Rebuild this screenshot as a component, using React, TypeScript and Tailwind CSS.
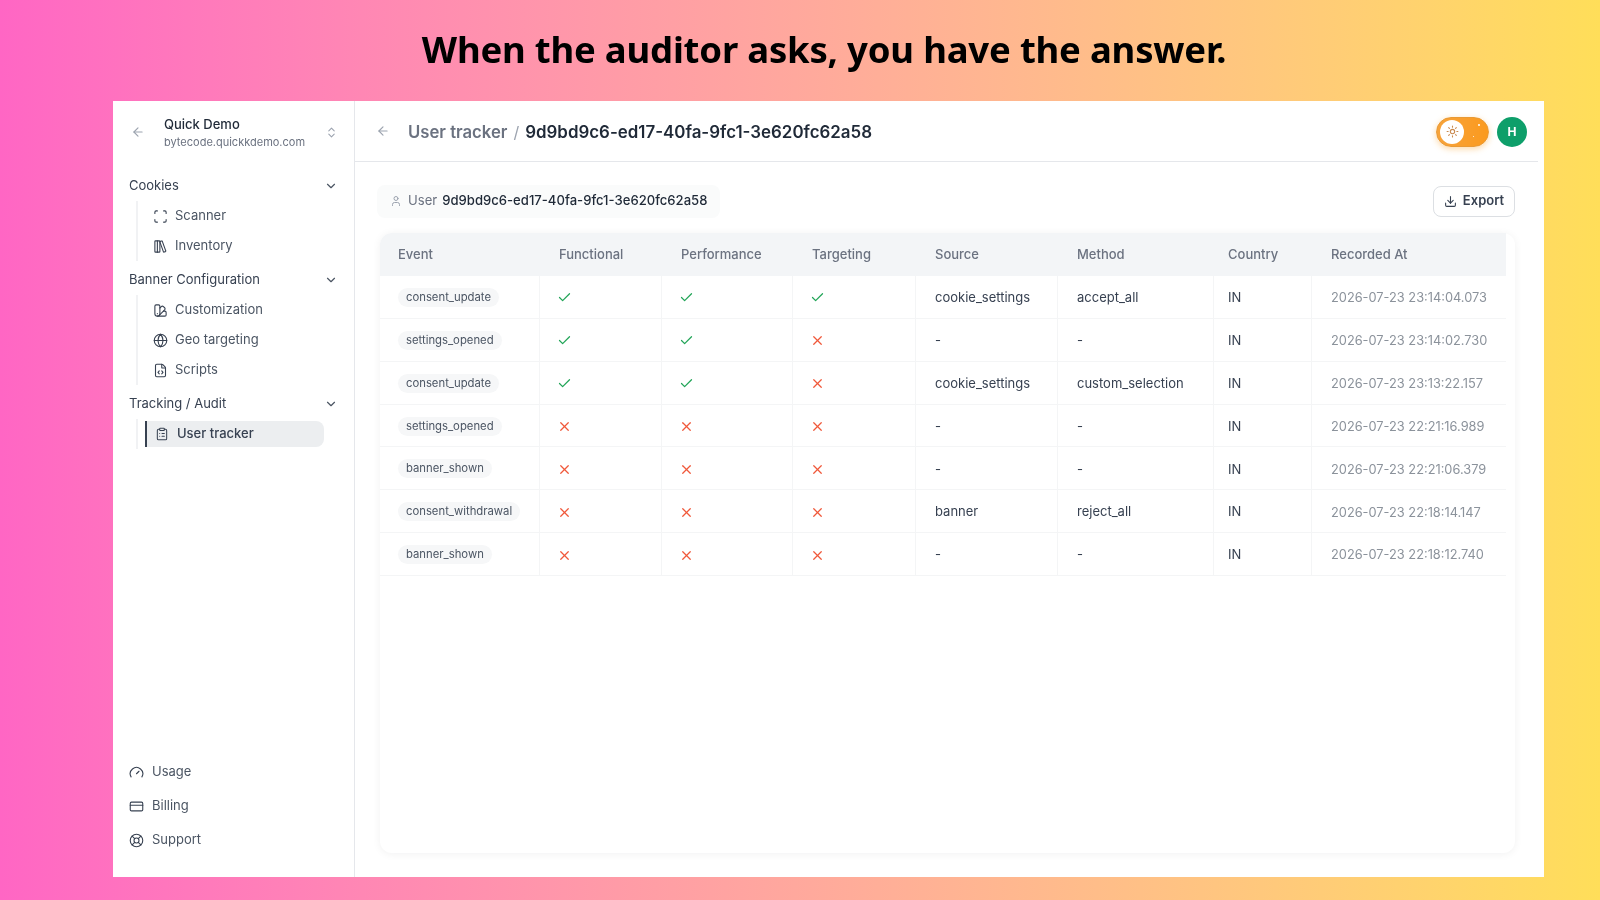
import { ArrowLeft, Check, ChevronDown, ChevronsUpDown, ClipboardList, CreditCard, Download, FileCode, Gauge, Globe, LibraryBig, LifeBuoy, Scan, Sun, SwatchBook, User, X } from 'lucide-react'

const rows = [
  { event: 'consent_update', f: true, p: true, t: true, source: 'cookie_settings', method: 'accept_all', at: '2026-07-23 23:14:04.073' },
  { event: 'settings_opened', f: true, p: true, t: false, source: '-', method: '-', at: '2026-07-23 23:14:02.730' },
  { event: 'consent_update', f: true, p: true, t: false, source: 'cookie_settings', method: 'custom_selection', at: '2026-07-23 23:13:22.157' },
  { event: 'settings_opened', f: false, p: false, t: false, source: '-', method: '-', at: '2026-07-23 22:21:16.989' },
  { event: 'banner_shown', f: false, p: false, t: false, source: '-', method: '-', at: '2026-07-23 22:21:06.379' },
  { event: 'consent_withdrawal', f: false, p: false, t: false, source: 'banner', method: 'reject_all', at: '2026-07-23 22:18:14.147' },
  { event: 'banner_shown', f: false, p: false, t: false, source: '-', method: '-', at: '2026-07-23 22:18:12.740' },
]

const groups = [
  { title: 'Cookies', items: [{ label: 'Scanner', icon: Scan }, { label: 'Inventory', icon: LibraryBig }] },
  { title: 'Banner Configuration', items: [{ label: 'Customization', icon: SwatchBook }, { label: 'Geo targeting', icon: Globe }, { label: 'Scripts', icon: FileCode }] },
]

const Mark = ({ ok }: { ok: boolean }) =>
  ok ? <Check size={15} strokeWidth={2} className="text-[#22a558] -ml-[2px]" /> : <X size={15} strokeWidth={2} className="text-[#f0583a] -ml-[2px]" />

const App = () => {
  return (
    <div className="w-[1600px] h-[900px] overflow-hidden bg-linear-to-r from-[#ff66c4] to-[#ffde59] font-['Inter','Noto_Sans',sans-serif]">
      <h1 className="h-[101px] pt-[25px] pl-[48px] text-center text-[36.5px] leading-[48px] font-bold text-black font-['Noto_Sans',sans-serif] tracking-[-0.2px] blur-[0.3px]">
        When the auditor asks, you have the answer.
      </h1>

      <div className="ml-[113px] w-[1431px] h-[776px] bg-white flex blur-[0.35px]">
        {/* sidebar */}
        <aside className="w-[242px] shrink-0 border-r border-[#e5e7eb] flex flex-col pl-[16px] pr-[14px] pb-[20px]">
          <div className="flex items-center h-[62px] mb-[8px]">
            <ArrowLeft size={14} className="text-[#9ca3af] ml-[2px]" />
            <div className="ml-[19px] flex-1 mt-[2px]">
              <div className="text-[13px] leading-[18px] font-medium text-[#1f2937]">Quick Demo</div>
              <div className="text-[11px] leading-[18px] text-[#6b7280]">bytecode.quickkdemo.com</div>
            </div>
            <ChevronsUpDown size={13} className="text-[#9ca3af] mr-[2px]" />
          </div>

          {groups.map((g) => (
            <div key={g.title}>
              <div className="flex items-center justify-between h-[30px] text-[13px] text-[#374151]">
                {g.title}
                <ChevronDown size={14} className="text-[#4b5563] mr-[2px]" />
              </div>
              <div className="ml-[7px] border-l-2 border-[#f1f2f4] pl-[15px] mb-[4px]">
                {g.items.map((it) => (
                  <div key={it.label} className="flex items-center h-[30px] text-[13px] text-[#4b5563]">
                    <it.icon size={15} strokeWidth={1.75} className="text-[#374151] mr-[7px]" />
                    {it.label}
                  </div>
                ))}
              </div>
            </div>
          ))}

          <div>
            <div className="flex items-center justify-between h-[30px] text-[13px] text-[#374151]">
              Tracking / Audit
              <ChevronDown size={14} className="text-[#4b5563] mr-[2px]" />
            </div>
            <div className="ml-[7px] border-l-2 border-[#f1f2f4] pl-[7px] py-[2px]">
              <div className="flex items-center h-[26px] w-[179px] rounded-r-lg bg-[#eceef0] border-l-2 border-[#374151] pl-[8px] text-[13px] font-medium text-[#374151]">
                <ClipboardList size={14} strokeWidth={1.75} className="mr-[8px]" />
                User tracker
              </div>
            </div>
          </div>

          <div className="mt-auto flex flex-col">
            {[
              { label: 'Usage', icon: Gauge },
              { label: 'Billing', icon: CreditCard },
              { label: 'Support', icon: LifeBuoy },
            ].map((it) => (
              <div key={it.label} className="flex items-center h-[34px] text-[13px] text-[#4b5563]">
                <it.icon size={15} strokeWidth={1.75} className="text-[#374151] mr-[8px]" />
                {it.label}
              </div>
            ))}
          </div>
        </aside>

        {/* main */}
        <main className="flex-1 min-w-0 flex flex-col">
          <header className="h-[61px] shrink-0 mr-[6px] border-b border-[#e5e7eb] flex items-center pl-[21px] pr-[11px]">
            <ArrowLeft size={14} className="text-[#9ca3af]" />
            <div className="ml-[18px] flex items-center pt-[3px]">
              <span className="text-[16.7px] font-semibold text-[#6b7280]">User tracker</span>
              <span className="mx-[6px] text-[16px] text-[#9ca3af]">/</span>
              <span className="text-[16.9px] font-semibold text-[#1f2937]">9d9bd9c6-ed17-40fa-9fc1-3e620fc62a58</span>
            </div>
            <div className="ml-auto flex items-center gap-[8px] pt-[1px]">
              <div className="w-[53px] h-[30px] rounded-full bg-linear-to-r from-[#f7a33a] to-[#fb9a1c] border border-[#e99a35] shadow-[0_2px_6px_rgba(251,160,40,0.4)] flex items-center pl-[3px] relative">
                <div className="w-[24px] h-[24px] rounded-full bg-white flex items-center justify-center">
                  <Sun size={13} className="text-[#c98a50]" />
                </div>
                <span className="absolute right-[8px] top-[6px] w-[2px] h-[2px] rounded-full bg-white" />
                <span className="absolute right-[14px] top-[18px] w-[1px] h-[1px] rounded-full bg-white" />
              </div>
              <div className="w-[30px] h-[30px] rounded-full bg-[#0e9f6a] text-white text-[12px] font-bold flex items-center justify-center">H</div>
            </div>
          </header>

          <div className="flex-1 min-h-0 pl-[22px] pr-[29px] pb-[24px] pt-[22px] flex flex-col">
            <div className="flex items-center justify-between h-[34px] shrink-0">
              <div className="h-[33px] rounded-lg bg-[#fafbfb] flex items-center pl-[13px] pr-[13px] text-[13.1px]">
                <User size={12} className="text-[#9ca3af] mr-[6px]" />
                <span className="text-[#6b7280] mr-[5px]">User</span>
                <span className="font-medium text-[#1f2937]">9d9bd9c6-ed17-40fa-9fc1-3e620fc62a58</span>
              </div>
              <button className="w-[82px] h-[31px] rounded-lg border-[1.5px] border-[#dcdfe3] flex items-center justify-center gap-[6px] text-[13px] font-semibold text-[#374151]">
                <Download size={13} />
                Export
              </button>
            </div>

            <div className="mt-[15px] flex-1 min-h-0 ml-[3px] rounded-xl shadow-[0_1px_8px_rgba(17,24,39,0.06)] pr-[9px]">
              <table className="w-full table-fixed border-separate border-spacing-0 text-[13px]">
                <colgroup>
                  <col className="w-[160px]" />
                  <col className="w-[122px]" />
                  <col className="w-[131px]" />
                  <col className="w-[123px]" />
                  <col className="w-[142px]" />
                  <col className="w-[156px]" />
                  <col className="w-[98px]" />
                  <col />
                </colgroup>
                <thead>
                  <tr className="h-[43px] text-left text-[13px] font-medium text-[#6b7280]">
                    {['Event', 'Functional', 'Performance', 'Targeting', 'Source', 'Method', 'Country', 'Recorded At'].map((h, i) => (
                      <th key={h} className={`font-medium bg-[#f3f5f7] ${i === 0 ? 'pl-[18px] rounded-tl-xl' : i === 6 ? 'pl-[14px]' : 'pl-[19px]'}`}>
                        {h}
                      </th>
                    ))}
                  </tr>
                </thead>
                <tbody>
                  {rows.map((r, idx) => (
                    <tr key={idx} className="h-[42.86px] text-[#374151]">
                      <td className="pl-[18px] pt-[2px] border-b border-r border-[#f4f5f6]">
                        <span className="inline-block h-[19px] leading-[19px] px-[8px] -translate-y-[1px] rounded-full bg-[#f6f7f8] text-[11.3px] text-[#4b5563]">{r.event}</span>
                      </td>
                      <td className="pl-[19px] pt-[2px] border-b border-r border-[#f4f5f6]"><Mark ok={r.f} /></td>
                      <td className="pl-[19px] pt-[2px] border-b border-r border-[#f4f5f6]"><Mark ok={r.p} /></td>
                      <td className="pl-[19px] pt-[2px] border-b border-r border-[#f4f5f6]"><Mark ok={r.t} /></td>
                      <td className="pl-[19px] pt-[2px] border-b border-r border-[#f4f5f6]">{r.source}</td>
                      <td className="pl-[19px] pt-[2px] border-b border-r border-[#f4f5f6]">{r.method}</td>
                      <td className="pl-[14px] pt-[2px] border-b border-r border-[#f4f5f6]">IN</td>
                      <td className="pl-[19px] pt-[2px] border-b border-[#f4f5f6] text-[12.8px] text-[#8b929b]">{r.at}</td>
                    </tr>
                  ))}
                </tbody>
              </table>
            </div>
          </div>
        </main>
      </div>
    </div>
  )
}

export default App
